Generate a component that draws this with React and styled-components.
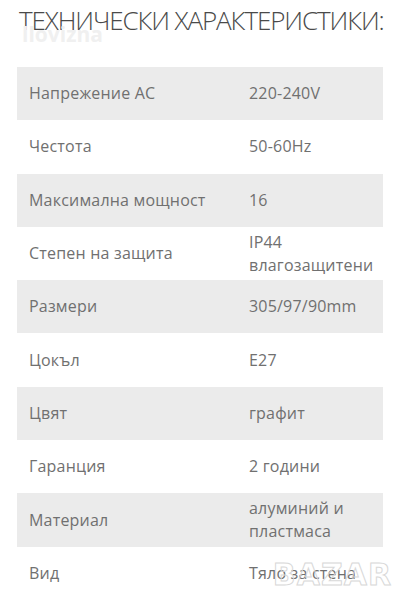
import React from 'react'
import styled, { createGlobalStyle } from 'styled-components'

const GlobalStyle = createGlobalStyle`
  html, body {
    margin: 0;
    padding: 0;
    background: #fff;
  }
  body {
    font-family: 'Open Sans', 'Liberation Sans', sans-serif;
    color: #666;
  }
`

const Page = styled.div`
  position: relative;
  width: 400px;
  height: 600px;
  overflow: hidden;
  padding: 0 17px;
  box-sizing: border-box;
`

const Title = styled.h2`
  margin: 0;
  padding: 4px 0 0 2px;
  height: 67px;
  box-sizing: border-box;
  font-size: 26px;
  font-weight: 300;
  line-height: 32px;
  color: #4a4a4a;
  letter-spacing: -1.1px;
  white-space: nowrap;
`

const Watermark = styled.span`
  position: absolute;
  left: 22px;
  top: 20px;
  font-family: 'Open Sans', sans-serif;
  font-weight: 700;
  font-size: 21px;
  color: #f0f0f0;
  pointer-events: none;
`

const Table = styled.div`
  display: flex;
  flex-direction: column;
`

const Row = styled.div`
  display: grid;
  grid-template-columns: 232px 1fr;
  align-items: center;
  height: 53.3px;
  background: ${(p) => (p.$shaded ? '#ebebeb' : '#fff')};
`

const Cell = styled.div`
  padding-left: 12px;
  font-size: 16px;
  line-height: 23px;
  color: #707070;
  font-weight: 400;
  letter-spacing: 0.2px;
`

const Value = styled(Cell)`
  padding-left: 0;
`

const Logo = styled.span`
  position: absolute;
  right: 8px;
  bottom: 8px;
  font-family: 'DejaVu Sans', sans-serif;
  font-weight: 700;
  font-size: 30px;
  letter-spacing: 1px;
  color: transparent;
  -webkit-text-stroke: 1px #d8d8d8;
  pointer-events: none;
`

const specs = [
  ['Напрежение AC', '220-240V'],
  ['Честота', '50-60Hz'],
  ['Максимална мощност', '16'],
  ['Степен на защита', 'IP44\nвлагозащитени'],
  ['Размери', '305/97/90mm'],
  ['Цокъл', 'E27'],
  ['Цвят', 'графит'],
  ['Гаранция', '2 години'],
  ['Материал', 'алуминий и\nпластмаса'],
  ['Вид', 'Тяло за стена'],
]

export default function App() {
  return (
    <Page>
      <GlobalStyle />
      <Watermark>llovizna</Watermark>
      <Title>ТЕХНИЧЕСКИ ХАРАКТЕРИСТИКИ:</Title>
      <Table>
        {specs.map(([label, value], i) => (
          <Row key={label} $shaded={i % 2 === 0}>
            <Cell>{label}</Cell>
            <Value>
              {value.split('\n').map((line) => (
                <div key={line}>{line}</div>
              ))}
            </Value>
          </Row>
        ))}
      </Table>
      <Logo>BAZAR</Logo>
    </Page>
  )
}
